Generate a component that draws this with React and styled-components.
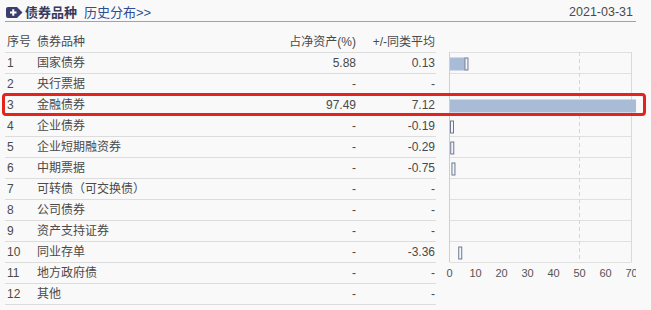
import React from "react";
import styled, { createGlobalStyle } from "styled-components";

const Global = createGlobalStyle`
  html, body { margin: 0; padding: 0; background: #f9f9f9; }
  body { font-family: "Liberation Sans", "Noto Sans CJK SC", sans-serif; }
`;

const Wrapper = styled.div`
  position: relative;
  width: 631px;
  margin-left: 5px;
  font-family: "Liberation Sans", "Noto Sans CJK SC", sans-serif;
  color: #4a4a4a;
  font-size: 12px;
`;

const TitleBar = styled.div`
  box-sizing: border-box;
  height: 22px;
  padding: 3px 3px 0 1px;
  border-bottom: 1px solid #a3a3a3;
  display: flex;
  align-items: center;
`;

const Title = styled.span`
  margin-left: 2px;
  font-size: 13px;
  font-weight: bold;
  color: #363a5c;
  line-height: 17px;
`;

const HistoryLink = styled.a`
  margin-left: 7px;
  font-size: 13px;
  color: #2f4d94;
  text-decoration: none;
  line-height: 17px;
`;

const DateText = styled.span`
  margin-left: auto;
  font-size: 12.5px;
  color: #4a4a4a;
  line-height: 17px;
`;

const Body = styled.div`
  display: flex;
  align-items: flex-start;
  gap: 10px;
`;

const Table = styled.div`
  width: 431px;
`;

const Row = styled.div`
  display: grid;
  grid-template-columns: 32px 1fr 100px 80px;
  height: ${(p) => (p.$head ? "31px" : "21px")};
  box-sizing: border-box;
  padding-top: ${(p) => (p.$head ? "10px" : "0")};
  border-bottom: 1px solid #dcdcdc;
  line-height: 20px;
  white-space: nowrap;
`;

const Cell = styled.div`
  padding-left: ${(p) => (p.$first ? "2px" : "0")};
  padding-right: ${(p) => (p.$last ? "1px" : "0")};
  text-align: ${(p) => (p.$num ? "right" : "left")};
`;

const Highlight = styled.div`
  position: absolute;
  left: -3px;
  top: 93px;
  width: 644px;
  height: 23px;
  box-sizing: border-box;
  border: 3px solid #e2231e;
  border-radius: 4px;
  pointer-events: none;
`;

const ChartSvg = styled.svg`
  display: block;
  margin-top: 30px;
  flex: none;
  overflow: hidden;
`;

const rows = [
  ["1", "国家债券", "5.88", "0.13"],
  ["2", "央行票据", "-", "-"],
  ["3", "金融债券", "97.49", "7.12"],
  ["4", "企业债券", "-", "-0.19"],
  ["5", "企业短期融资券", "-", "-0.29"],
  ["6", "中期票据", "-", "-0.75"],
  ["7", "可转债（可交换债）", "-", "-"],
  ["8", "公司债券", "-", "-"],
  ["9", "资产支持证券", "-", "-"],
  ["10", "同业存单", "-", "-3.36"],
  ["11", "地方政府债", "-", "-"],
  ["12", "其他", "-", "-"],
];

const X0 = 3.5;
const K = 2.6;

function TagIcon() {
  return (
    <svg width="17" height="11" viewBox="0 0 17 11">
      <path d="M2 0 H11 L16.5 5.5 L11 11 H2 Q0 11 0 9 V2 Q0 0 2 0 Z" fill="#3b3e6c" />
      <path d="M4 5.5 H10.5 M7.25 2.3 V8.7" stroke="#fff" strokeWidth="2" />
    </svg>
  );
}

function Chart() {
  const n = 10;
  const ticks = [0, 10, 20, 30, 40, 50, 60, 70];
  return (
    <ChartSvg width="190" height="232" viewBox="0 0 190 232">
      {Array.from({ length: n + 1 }).map((_, i) => (
        <line key={"h" + i} x1={X0} x2={X0 + 70 * K} y1={i * 21 + 0.5} y2={i * 21 + 0.5} stroke="#e0e0e0" />
      ))}
      <line x1={X0 + 50 * K} x2={X0 + 50 * K} y1={0} y2={210} stroke="#d6d6d6" strokeDasharray="4 3" />
      <line x1={X0 + 70 * K} x2={X0 + 70 * K} y1={0} y2={210} stroke="#dadada" />
      {rows.slice(0, n).map((r, i) => {
        const v = parseFloat(r[2]);
        const d = parseFloat(r[3]);
        const els = [];
        const val = isNaN(v) ? 0 : v;
        if (!isNaN(v)) {
          els.push(<rect key="b" x={X0} y={i * 21 + 5.5} width={v * K} height={13} fill="#a8bcd8" />);
        }
        if (!isNaN(d)) {
          const avg = val - d;
          els.push(
            <rect key="m" x={X0 + avg * K + 0.5} y={i * 21 + 6} width={3} height={12} fill="#f4f6fa" stroke="#6b7993" strokeWidth="1" />
          );
        }
        return <g key={i}>{els}</g>;
      })}
      <line x1={X0} x2={X0} y1={0} y2={210} stroke="#cfcfcf" />
      {ticks.map((t) => (
        <text key={t} x={X0 + t * K} y={224.5} textAnchor="middle" fontSize="11" fill="#555" fontFamily='"Liberation Sans", sans-serif'>
          {t}
        </text>
      ))}
    </ChartSvg>
  );
}

export default function App() {
  return (
    <>
      <Global />
      <Wrapper>
        <TitleBar>
          <TagIcon />
          <Title>债券品种</Title>
          <HistoryLink href="#">历史分布&gt;&gt;</HistoryLink>
          <DateText>2021-03-31</DateText>
        </TitleBar>
        <Body>
          <Table>
            <Row $head>
              <Cell $first>序号</Cell>
              <Cell>债券品种</Cell>
              <Cell $num>占净资产(%)</Cell>
              <Cell $num $last>+/-同类平均</Cell>
            </Row>
            {rows.map((r) => (
              <Row key={r[0]}>
                <Cell $first>{r[0]}</Cell>
                <Cell>{r[1]}</Cell>
                <Cell $num>{r[2]}</Cell>
                <Cell $num $last>{r[3]}</Cell>
              </Row>
            ))}
          </Table>
          <Chart />
        </Body>
        <Highlight />
      </Wrapper>
    </>
  );
}
